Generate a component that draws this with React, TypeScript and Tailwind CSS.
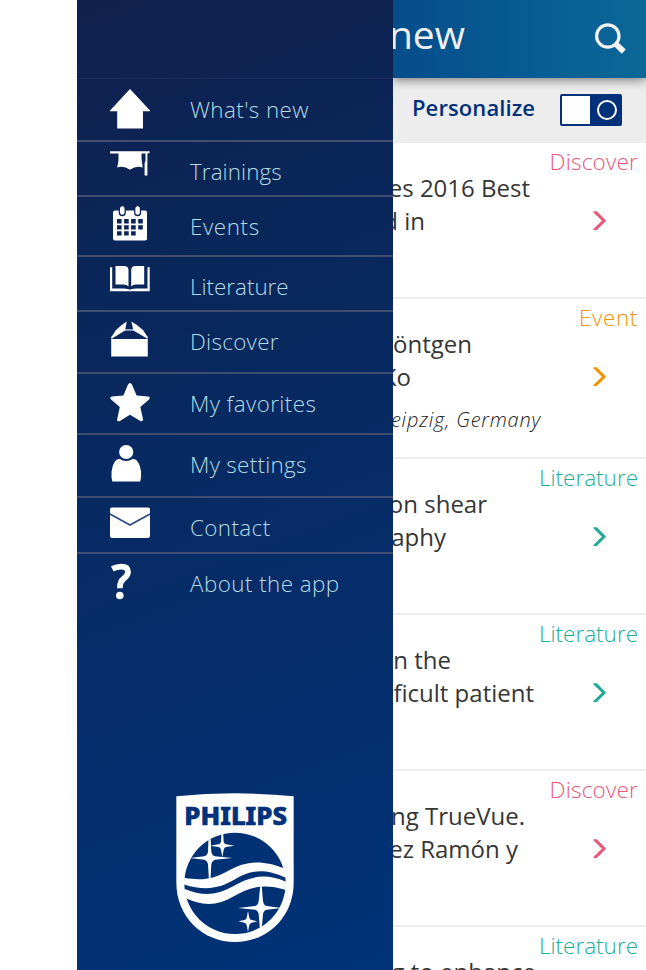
import type { ReactNode } from "react";

type Tone = "pink" | "orange" | "teal";

const toneText: Record<Tone, string> = {
  pink: "text-[#ec5679]",
  orange: "text-[#f39200]",
  teal: "text-[#1fac96]",
};

function HomeIcon() {
  return (
    <svg width="40" height="40" viewBox="0 0 40 40" fill="#fff">
      <path d="M20 0 40 21.5V22.2H33V39.5H7.2V22.2H0V21.5Z" />
    </svg>
  );
}

function CapIcon() {
  return (
    <svg width="40" height="26" viewBox="0 0 40 26" fill="#fff">
      <path d="M0 0.3H39.5V2.3H37.4V24.4H34.6V12L35.5 10V2.5H31.5Q31.2 9 32.7 16.5Q26 14.5 20 18.7Q14 14.5 7.2 16.5Q9 10 8.5 2.6H0Z" />
    </svg>
  );
}

function CalendarIcon() {
  return (
    <svg width="40" height="36" viewBox="0 0 40 36">
      <rect x="3" y="4.5" width="34" height="30" rx="2" fill="#fff" />
      <g fill="#fff" stroke="#0a2457" strokeWidth="1.3">
        <rect x="9.4" y="-0.3" width="5.8" height="9.8" rx="2.8" />
        <rect x="24.7" y="-0.3" width="5.8" height="9.8" rx="2.8" />
      </g>
      <g fill="#0a2457">
        <path d="M7 13h4.6v4.4h-4.6zM14.1 13h4.6v4.4h-4.6zM21.1 13h4.6v4.4h-4.6zM28.2 13h4.6v4.4h-4.6zM7 19.2h4.6v4.2h-4.6zM14.1 19.2h4.6v4.2h-4.6zM21.1 19.2h4.6v4.2h-4.6zM28.2 19.2h4.6v4.2h-4.6zM7 25.2h4.6v4.2h-4.6zM14.1 25.2h4.6v4.2h-4.6zM21.1 25.2h4.6v4.2h-4.6z" />
      </g>
    </svg>
  );
}

function BookIcon() {
  return (
    <svg width="40" height="27" viewBox="0 0 40 27" fill="#fff">
      <path d="M0 1.3H2.2V22.5H14Q18.5 22.5 19.8 24Q21.2 22.5 25.7 22.5H37.5V1.3H39.7V25.2H0Z" />
      <path d="M5.5 0H14Q18.5 0 18.5 4V20.5Q17 18.5 13.5 18.5H5.5Z" />
      <path d="M34.2 0H25.7Q21.2 0 21.2 4V20.5Q22.7 18.5 26.2 18.5H34.2Z" />
    </svg>
  );
}

function BoxIcon() {
  return (
    <svg width="40" height="38" viewBox="0 0 40 38" fill="#fff">
      <path d="M1.2 18H37.8V35.5H1.2Z" />
      <path d="M1.8 17.5V15.8M37.2 17.5V15.8" stroke="#fff" strokeWidth="1.2" />
      <path d="M16.8 0.6 15 9.6 2.4 17.2 1.4 16 6 9Q11 4 16.8 0.6Z" />
      <path d="M21.4 0.6 23.4 9.6 36.6 17.2 37.6 16 33 9Q27.5 4 21.4 0.6Z" />
      <path d="M14 8.4H25V9.5H14Z" />
    </svg>
  );
}

function StarIcon() {
  return (
    <svg width="40" height="40" viewBox="0 0 40 40" fill="#fff">
      <path d="M17.8 2Q20 -1.8 22.2 2L26.6 12.4 38 13.4Q41 14 39 16.4L30.4 24 33 36.2Q33 39.2 30.3 38L20 31.8 9.8 38Q6.7 39.2 7.2 36.2L9.8 24 1 16.4Q-1 14 2 13.4L13.4 12.4Z" />
    </svg>
  );
}

function PersonIcon() {
  return (
    <svg width="40" height="38" viewBox="0 0 40 38" fill="#fff">
      <circle cx="16.2" cy="8" r="7.1" />
      <path d="M9.5 14.8Q16 19.2 23 14.8Q29.5 15.6 31 27.5Q31.6 33.5 30.2 37.5H2.3Q1 33.5 1.6 27.5Q3 15.6 9.5 14.8Z" />
    </svg>
  );
}

function MailIcon() {
  return (
    <svg width="40" height="32" viewBox="0 0 40 32">
      <rect x="0" y="0.5" width="40" height="30.4" rx="1.8" fill="#fff" />
      <path d="M0 7 20 18 40 7" fill="none" stroke="#2d4a83" strokeWidth="1.6" />
    </svg>
  );
}

function QuestionIcon() {
  return (
    <svg width="40" height="38" viewBox="0 0 40 38">
      <path d="M2.3 5.9Q6.5 3.6 11.5 3.6Q18 3.6 18 9.1Q18 12.5 13.5 15.8Q9.8 18.5 9.8 25.3" fill="none" stroke="#fff" strokeWidth="5.8" />
      <circle cx="9.8" cy="32.5" r="3.8" fill="#fff" />
    </svg>
  );
}

const menu: { label: string; icon: ReactNode; row: string; track: string }[] = [
  { label: "What's new", icon: <HomeIcon />, row: "h-[62px] border-b-2", track: "tracking-[0.4px]" },
  { label: "Trainings", icon: <CapIcon />, row: "h-[55px] border-b-2", track: "tracking-[0.1px]" },
  { label: "Events", icon: <CalendarIcon />, row: "h-[60px] border-b-2", track: "tracking-[0.6px]" },
  { label: "Literature", icon: <BookIcon />, row: "h-[55px] border-b-2", track: "tracking-[0px]" },
  { label: "Discover", icon: <BoxIcon />, row: "h-[62px] border-b-2", track: "tracking-[0.3px]" },
  { label: "My favorites", icon: <StarIcon />, row: "h-[61px] border-b-2", track: "tracking-[0.4px]" },
  { label: "My settings", icon: <PersonIcon />, row: "h-[63px] border-b-2", track: "tracking-[0.3px]" },
  { label: "Contact", icon: <MailIcon />, row: "h-[56px] border-b-2", track: "tracking-[0.4px]" },
  { label: "About the app", icon: <QuestionIcon />, row: "h-[62px]", track: "tracking-[0.45px]" },
];

function PhilipsLogo() {
  return (
    <svg width="118" height="149" viewBox="33 39 354 447">
      <defs>
        <clipPath id="globe">
          <circle cx="210" cy="310" r="153" />
        </clipPath>
      </defs>
      <path d="M34 49Q210 31 386 49V308C386 410 307 486 210 486S34 410 34 308Z" fill="#fff" />
      <text x="58" y="135" textLength="308" lengthAdjust="spacingAndGlyphs" fill="#00317a" stroke="#00317a" strokeWidth="2" className="font-['Noto_Sans','Open_Sans',sans-serif] text-[73px] font-extrabold">
        PHILIPS
      </text>
      <circle cx="210" cy="310" r="152" fill="#003175" />
      <g fill="#fff" clipPath="url(#globe)">
        <path d="M50 292C110 304 145 297 190 272C240 244 290 236 364 268V294C290 260 250 275 210 298C160 328 115 333 50 311Z" />
        <path d="M50 323C110 349 150 348 200 321C255 289 300 276 372 309V333C300 309 255 320 208 348C155 379 110 380 50 348Z" />
        <path d="M131 160H136L139 215Q141 226 150 229L202 234 150 239Q141 242 139 253L136 302H132L129 253Q127 242 118 239L75 234 118 229Q127 226 129 215Z" />
        <path d="M170 150H174L176 185Q177 192 184 193L208 197 184 201Q177 202 176 209L172 232 168 209Q167 202 160 201L136 197 160 193Q167 192 168 185Z" />
        <path d="M286 315H290L294 364Q296 376 305 378L350 384 305 389Q296 391 294 402L290 450H285L281 402Q279 391 270 389L219 384 270 378Q279 376 281 364Z" />
        <path d="M249 393 253 413Q254 418 260 420L277 424 260 428Q254 430 253 435L249 456 245 435Q244 430 238 428L220 424 238 420Q244 418 245 413Z" />
      </g>
    </svg>
  );
}

function Chevron() {
  return (
    <svg width="14" height="20" viewBox="0 0 14 20" fill="currentColor">
      <path d="M0.4 0.3H3.8L13.1 9.7 3.8 19.1H0.4V18.1L8.9 9.7 0.4 1.3Z" />
    </svg>
  );
}

interface Article {
  tone: Tone;
  category: string;
  track: string;
  lines: { text: string; cls: string }[];
  place?: string;
  height: string;
}

const articles: Article[] = [
  { tone: "pink", category: "Discover", track: "tracking-[0.2px]", height: "h-[156px]", lines: [{ text: "es 2016 Best", cls: "w-[137px]" }, { text: "d in", cls: "w-[32px]" }] },
  { tone: "orange", category: "Event", track: "tracking-[0.6px]", height: "h-[160px]", lines: [{ text: "öntgen", cls: "w-[79px]" }, { text: "Ko", cls: "w-[18px]" }], place: "eipzig, Germany" },
  { tone: "teal", category: "Literature", track: "tracking-[0px]", height: "h-[156px]", lines: [{ text: "on shear", cls: "w-[94px]" }, { text: "aphy", cls: "w-[53px]" }] },
  { tone: "teal", category: "Literature", track: "tracking-[0px]", height: "h-[156px]", lines: [{ text: "n the", cls: "w-[58px]" }, { text: "ficult patient", cls: "w-[141px]" }] },
  { tone: "pink", category: "Discover", track: "tracking-[0.2px]", height: "h-[156px]", lines: [{ text: "ng TrueVue.", cls: "w-[132px]" }, { text: "ez Ramón y", cls: "w-[125px]" }] },
  { tone: "teal", category: "Literature", track: "tracking-[0px]", height: "h-[156px]", lines: [{ text: "g to enhance", cls: "w-[143px]" }] },
];

function ArticleRow({ article }: { article: Article }) {
  return (
    <article className={`shrink-0 border-b-2 border-[#ededed] ${article.height}`}>
      <div className={`flex h-7 justify-end pt-[3px] pr-2 text-[22.5px] leading-8 font-light ${article.track} ${toneText[article.tone]}`}>
        {article.category}
      </div>
      <div className="flex justify-between">
        <div className="w-[160px] text-[24px] leading-[33px] text-[#363636]">
          {article.lines.map((line) => (
            <div key={line.text} className={`flex justify-end whitespace-nowrap ${line.cls}`}>
              {line.text}
            </div>
          ))}
          {article.place && (
            <div className="mt-3 flex w-[148px] justify-end text-[20px] leading-[30px] font-light tracking-[0.8px] whitespace-nowrap text-[#222] italic">
              {article.place}
            </div>
          )}
        </div>
        <div className={`pt-[40px] pr-[39px] ${toneText[article.tone]}`}>
          <Chevron />
        </div>
      </div>
    </article>
  );
}

export default function App() {
  return (
    <div className="flex h-[970px] w-[646px] overflow-hidden bg-white pl-[77px] font-['Open_Sans','Noto_Sans',sans-serif]">
      <nav className="flex w-[316px] shrink-0 flex-col bg-linear-[160deg,#10204c_0%,#0a2659_25%,#062c67_58%,#003379_100%]">
        <div className="flex h-20 shrink-0 flex-col">
          <div className="h-[79px] border-b border-[#1c2f5e]" />
        </div>
        {menu.map((item) => (
          <div key={item.label} className={`flex shrink-0 items-start border-[#3f4d70] pl-[33px] ${item.row}`}>
            <div className="w-20 pt-[9px]">{item.icon}</div>
            <span className={`pt-3.5 text-[22.4px] leading-8 font-light whitespace-nowrap text-[#b5dbe4] ${item.track}`}>{item.label}</span>
          </div>
        ))}
        <div className="mt-auto flex justify-center pb-7">
          <PhilipsLogo />
        </div>
      </nav>
      <main className="flex w-[253px] shrink-0 flex-col overflow-hidden">
        <header className="z-10 flex h-[78px] shrink-0 items-start justify-between bg-linear-to-r from-[#054d8b] to-[#0c6899] shadow-[0_2px_10px_rgba(0,0,0,0.5)]">
          <h1 className="flex w-[72px] justify-end pt-2 text-[39px] leading-[52px] font-[370] text-[#f0f0f0]">new</h1>
          <svg width="32" height="32" viewBox="0 0 32 32" className="mt-[22px] mr-5" fill="none" stroke="#f4f4f4">
            <circle cx="13.8" cy="14" r="11.2" strokeWidth="3.2" />
            <path d="M20.5 21 22.5 23" strokeWidth="4" />
            <path d="M21.8 22 29.8 29.6" strokeWidth="5.8" />
          </svg>
        </header>
        <div className="flex h-[65px] shrink-0 items-start bg-[#ededed] pl-[19px]">
          <span className="w-[148px] pt-[13px] text-[22px] leading-8 font-[560] tracking-[0.1px] text-[#00317a]">Personalize</span>
          <div className="mt-4 flex h-8 w-[62px] rounded-[2px] bg-[#00317a] p-0.5">
            <div className="w-7 bg-white" />
            <div className="flex flex-1 items-center justify-center pl-[3px]">
              <div className="size-5 rounded-full border-2 border-white" />
            </div>
          </div>
        </div>
        {articles.map((article, i) => (
          <ArticleRow key={i} article={article} />
        ))}
      </main>
    </div>
  );
}
